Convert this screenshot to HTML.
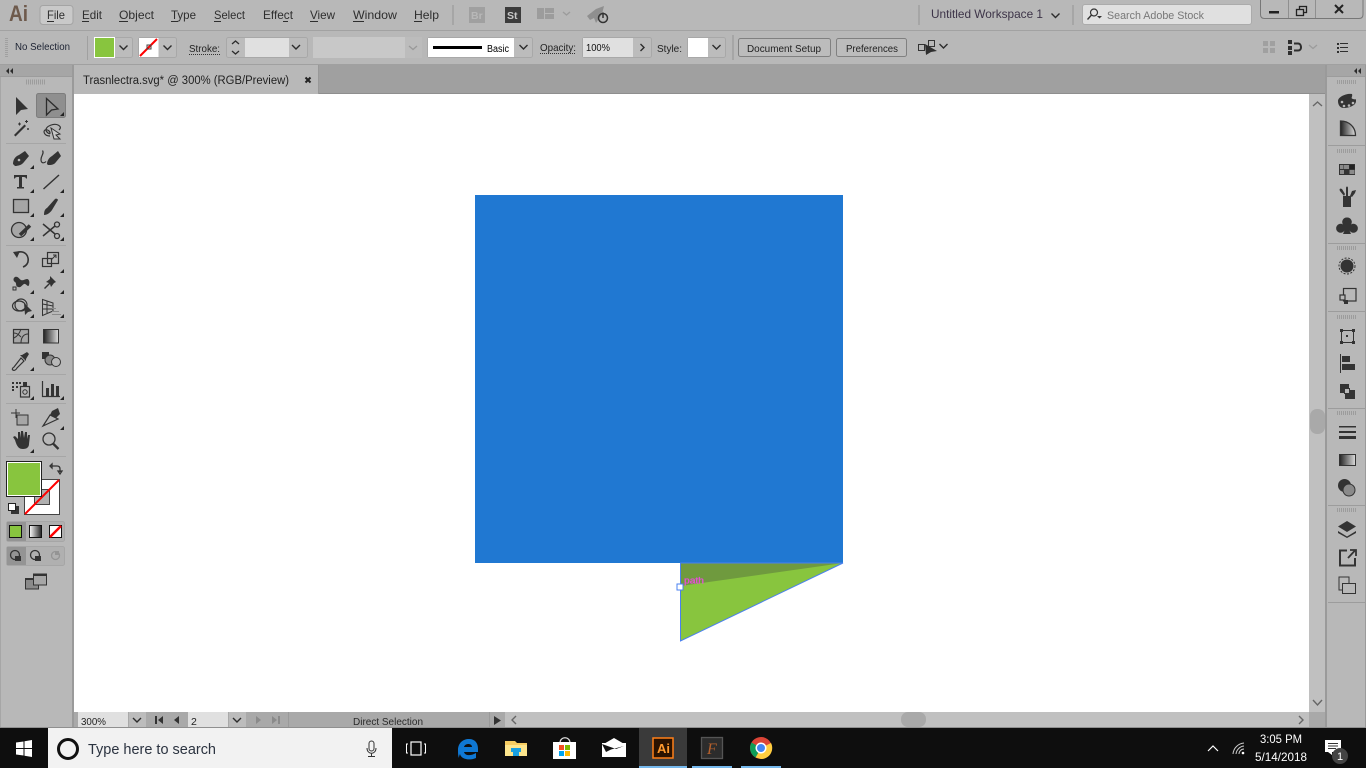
<!DOCTYPE html>
<html><head><meta charset="utf-8"><title>Illustrator</title>
<style>
html,body{margin:0;padding:0;width:1366px;height:768px;overflow:hidden;background:#b8b8b8}
svg{display:block;font-family:"Liberation Sans",sans-serif}
</style></head><body>
<svg width="1366" height="768" viewBox="0 0 1366 768" xmlns="http://www.w3.org/2000/svg">
<defs>
<path id="c" d="M-4 -2L0 2L4 -2" fill="none" stroke="#2c2c2c" stroke-width="1.4"/>
<path id="f" d="M-2 2H2V-2Z" fill="#222"/>
</defs>
<rect width="1366" height="768" fill="#b8b8b8"/>
<!-- separators top -->
<rect y="30" width="1366" height="1" fill="#a2a2a2"/>
<rect y="64" width="1366" height="1" fill="#a0a0a0"/>
<!-- tab bar -->
<rect x="73" y="65" width="1254" height="29" fill="#a0a0a0"/>
<rect x="73" y="93" width="1254" height="1" fill="#8e8e8e"/>
<rect x="74" y="65" width="244" height="29" fill="#b8b8b8"/>
<rect x="318" y="65" width="1" height="29" fill="#999"/>
<text x="83" y="84" font-size="11.5" fill="#222" textLength="206" lengthAdjust="spacingAndGlyphs">Trasnlectra.svg* @ 300% (RGB/Preview)</text>
<path d="M305.500 77.500L310.500 82.500M310.500 77.500L305.500 82.500" stroke="#222" stroke-width="2"/>
<!-- canvas -->
<rect x="74" y="94" width="1236" height="618" fill="#fff"/>
<rect x="475" y="195" width="368" height="368" fill="#2078d2"/>
<path d="M680.500 563H843L680.500 641Z" fill="#88c53e"/>
<path d="M680.500 563H843L680.500 586Z" fill="#6f9a3e"/>
<path d="M680.500 563H843L680.500 641Z" fill="none" stroke="#4a80f0" stroke-width="1"/>
<rect x="677" y="584" width="6" height="6" fill="#fff" stroke="#4a80f0"/>
<text x="684" y="583.500" font-size="9.500" fill="#e84fd8" stroke="#e84fd8" stroke-width="0.300" textLength="20" lengthAdjust="spacingAndGlyphs">path</text>
<!-- left panel -->
<rect x="0" y="65" width="72" height="663" fill="#b8b8b8"/>
<rect x="0" y="65" width="72" height="12" fill="#a6a6a6"/>
<rect x="0" y="76" width="72" height="1" fill="#9c9c9c"/>
<rect x="72" y="65" width="2" height="663" fill="#9a9a9a"/>
<rect x="0" y="77" width="1" height="651" fill="#a6a6a6"/>
<path d="M9 68L6 71L9 74ZM13 68L10 71L13 74Z" fill="#2c2c2c"/>
<line x1="26" x2="45" y1="82" y2="82" stroke="#9c9c9c" stroke-width="5" stroke-dasharray="1 1"/>
<g fill="#a6a6a6">
<rect x="6" y="143" width="60" height="1"/><rect x="6" y="245" width="60" height="1"/><rect x="6" y="321" width="60" height="1"/><rect x="6" y="374" width="60" height="1"/><rect x="6" y="403" width="60" height="1"/><rect x="6" y="456" width="60" height="1"/>
</g>
<!-- tools -->
<rect x="36.500" y="93.500" width="29" height="24" rx="2" fill="#8f8f8f" stroke="#7d7d7d"/>
<g fill="#333" stroke="none">
<path d="M16 97L28 109L21 110L16 115Z"/>
<path d="M46.500 98.500L58 109L51.500 110L46.500 115Z" fill="none" stroke="#2c2c2c" stroke-width="1.300"/>
<use href="#f" x="62" y="114"/>
<path d="M14 135L24.500 124.500L26 126L15.500 136.500Z"/>
<path d="M18 124h3M19.500 122.500v3M25 121.500h3M26.500 120v3M27 129h2M28 128v2" stroke="#333"/>
<path d="M50 136c-6 0-7-5-5-6s5 1 5 3-4-1-4-3c0-4 8-7 12-5s2 4 1 5" fill="none" stroke="#333" stroke-width="1.200"/>
<path d="M51 128L60 134L56 135L60 139L54 139Z" fill="#c8c8c8" stroke="#333"/>
<path d="M13 164c0-5 3-8 6-9l6-4 4 5-5 6c-2 3-6 4-9 4l-2-2zM18 160l2-2" />
<circle cx="19" cy="160" r="1.300" fill="#b8b8b8"/>
<use href="#f" x="32" y="167"/>
<path d="M47 164c0-4 3-7 5-8l6-5 3 5-5 6c-2 3-5 3-8 3z" stroke="none"/>
<path d="M42.500 150.500c2 3-1.500 5-1.500 9s3 4 5 2" fill="none" stroke="#333" stroke-width="1.200"/>
<path d="M14 175H27V178.500H26C25.500 177 25 177 22 177V187H24V188.500H17V187H19V177C16 177 15.500 177 15 178.500H14Z"/>
<use href="#f" x="32" y="191"/>
<path d="M43.500 189L59 175" fill="none" stroke="#333" stroke-width="1.500"/>
<use href="#f" x="62" y="191"/>
<rect x="13.500" y="199.500" width="15" height="13" fill="#a6a6a6" stroke="#333" stroke-width="1.300"/>
<use href="#f" x="32" y="215"/>
<path d="M44 215c0-4 1-6 3-7l8-9c1-1 3 0 3 1l-6 10c-2 3-5 5-8 5z"/>
<use href="#f" x="62" y="215"/>
<circle cx="19" cy="230" r="7.500" fill="#a6a6a6" stroke="#333" stroke-width="1.300"/>
<path d="M20 235L30 225.500" stroke="#333" stroke-width="3.500"/>
<use href="#f" x="32" y="239"/>
<circle cx="57" cy="224.500" r="2.500" fill="none" stroke="#333" stroke-width="1.300"/><circle cx="57" cy="236" r="2.500" fill="none" stroke="#333" stroke-width="1.300"/>
<path d="M43 224L55 234M43 236L55 226" stroke="#333" stroke-width="1.500"/>
<use href="#f" x="62" y="239"/>
<path d="M16 253c6-3 11 0 12 5s-2 8-5 9" fill="none" stroke="#333" stroke-width="1.600"/><path d="M13 252L20 251L17 258Z"/>
<rect x="42.500" y="258.500" width="9" height="8" fill="none" stroke="#333" stroke-width="1.200"/><rect x="47.500" y="252.500" width="11" height="11" fill="none" stroke="#333" stroke-width="1.200"/><path d="M51 260L56 255M53 255H56V258" fill="none" stroke="#333"/>
<use href="#f" x="62" y="271"/>
<path d="M15 277c3-1 4 2 6 3s4-1 6-1 3 3 2 6-3-2-5-1-3 4-6 3-1-4-3-5-2-4 0-5z"/>
<rect x="13" y="287" width="3" height="3" fill="#b8b8b8" stroke="#333"/>
<use href="#f" x="32" y="292"/>
<path d="M50 276l6 6-2 1-3 4-1-3-5 5-1-1 5-5-3-1 4-3z"/>
<use href="#f" x="62" y="292"/>
<ellipse cx="19" cy="306" rx="6.500" ry="5" fill="none" stroke="#333" stroke-width="1.200"/><circle cx="21" cy="305" r="6" fill="none" stroke="#333" stroke-width="1.200"/><path d="M24 303L32 311L28 312L25 315Z"/>
<use href="#f" x="32" y="316"/>
<path d="M42.500 299.500V315.500L53 311V303ZM42.500 304L53 306M42.500 309L53 309M47 301.500V313" fill="none" stroke="#333"/>
<path d="M52 308H56V309H52zM52 311H59V312H52zM52 314H61V315H52z" fill="#8a8a8a"/>
<use href="#f" x="62" y="316"/>
<rect x="13.500" y="329.500" width="15" height="13.500" fill="#a6a6a6" stroke="#333" stroke-width="1.200"/>
<path d="M14 338c4-2 6-6 7-9M28 334c-4 0-7 3-7 9M14 333c3 0 5 2 7 4" fill="none" stroke="#333"/>
</g>
<defs><linearGradient id="g1"><stop offset="0" stop-color="#222"/><stop offset="1" stop-color="#ddd"/></linearGradient><linearGradient id="g2"><stop offset="0" stop-color="#fff"/><stop offset="1" stop-color="#222"/></linearGradient></defs>
<rect x="43.500" y="329.500" width="15" height="13.500" fill="url(#g1)" stroke="#333"/>
<g fill="#333">
<path d="M14 367c-2 1-2 3-1 3 1 1 3 0 4-2l7-7-3-3z" fill="none" stroke="#333" stroke-width="1.200"/>
<path d="M22 355L27 352L29 354L26 359L26 361L20 355Z"/><use href="#f" x="32" y="369"/>
<rect x="42" y="352" width="7" height="7"/><circle cx="50" cy="360" r="5" fill="#8a8a8a" stroke="#333"/><circle cx="56" cy="362" r="4.500" fill="#b8b8b8" stroke="#333"/>
<rect x="12" y="382" width="2" height="2"/><rect x="16" y="382" width="2" height="2"/><rect x="19" y="382" width="2" height="2"/><rect x="12" y="386" width="2" height="2"/><rect x="16" y="386" width="2" height="2"/><rect x="12" y="389" width="2" height="2"/>
<rect x="20.500" y="386.500" width="9" height="10.500" fill="none" stroke="#333" stroke-width="1.200"/><rect x="23" y="382" width="4" height="4"/><circle cx="25" cy="392" r="2.200" fill="none" stroke="#333"/><use href="#f" x="32" y="398"/>
<path d="M42.500 381V396.500H60" fill="none" stroke="#333" stroke-width="1.200"/><rect x="46" y="388" width="3" height="8"/><rect x="51" y="384" width="3" height="12"/><rect x="56" y="386" width="3" height="10"/><use href="#f" x="62" y="398"/>
<path d="M11 413H20M16 409V418" stroke="#333"/><path d="M17 415H28V425H17Z" fill="#a6a6a6" stroke="#333"/>
<path d="M43 426L50 415L58 419Z" fill="none" stroke="#333" stroke-width="1.200"/><path d="M52 411L58 408L60 414L56 418L50 415Z"/><use href="#f" x="62" y="428"/>
<path d="M15 440l-2-3 2-1 3 3v-7h2l1 6v-7h2l1 7 1-6h2l0 7 1-4h2l-1 9c0 3-2 5-6 5s-6-2-8-9z"/><use href="#f" x="32" y="451"/>
<circle cx="49" cy="439" r="6" fill="none" stroke="#333" stroke-width="1.300"/><path d="M53 443.500L58.500 449" stroke="#333" stroke-width="2.300"/>
</g>
<!-- fill stroke -->
<rect x="24.500" y="479.500" width="35" height="35" fill="#fff" stroke="#444"/>
<rect x="34.500" y="489.500" width="15" height="15" fill="#b0b0b0" stroke="#444"/>
<path d="M25 514L59 480" stroke="#f00" stroke-width="2"/>
<rect x="6.500" y="461.500" width="35" height="35" fill="#88c53e" stroke="#222"/>
<rect x="7.500" y="462.500" width="33" height="33" fill="none" stroke="#fff"/>
<path d="M52 466h5c2 0 3 1 3 3v3M52 464l-2 2 2 2zM58 471l2 3 2-3z" fill="none" stroke="#333" stroke-width="1.300"/>
<rect x="11.500" y="506.500" width="7" height="7" fill="#333" stroke="#333"/><rect x="8.500" y="503.500" width="7" height="7" fill="#fff" stroke="#222"/>
<rect x="6.500" y="521.500" width="58" height="20" rx="2" fill="#b0b0b0" stroke="#a6a6a6"/>
<rect x="7" y="522" width="19" height="19" fill="#949494"/>
<rect x="9.500" y="525.500" width="12" height="12" fill="#88c53e" stroke="#111"/>
<rect x="29.500" y="525.500" width="12" height="12" fill="url(#g2)" stroke="#111"/>
<rect x="49.500" y="525.500" width="12" height="12" fill="#fff" stroke="#111"/><path d="M50 537L61 526" stroke="#f00" stroke-width="2.500"/>
<rect x="6.500" y="546.500" width="58" height="19" rx="2" fill="#b0b0b0" stroke="#a6a6a6"/>
<rect x="7" y="547" width="19" height="18" fill="#949494"/>
<g fill="none" stroke="#333" stroke-width="1.300"><circle cx="15" cy="555" r="4.500"/><circle cx="35" cy="555" r="4.500"/></g>
<rect x="15" y="556" width="6" height="5" fill="#333"/><rect x="35" y="556" width="6" height="5" fill="#333"/>
<circle cx="55.500" cy="555.500" r="4" fill="none" stroke="#949494" stroke-width="1.300"/><rect x="55" y="551" width="4" height="4" fill="#949494"/>
<rect x="25.500" y="578.500" width="13" height="10.500" fill="#8a8a8a" stroke="#333"/><rect x="33.500" y="574" width="13" height="11" fill="#a6a6a6" stroke="#333"/><rect x="33" y="573.500" width="14" height="2.500" fill="#333"/><rect x="25" y="578" width="8" height="2" fill="#333"/>
<!-- right scroll -->
<rect x="1309" y="94" width="16" height="634" fill="#c0c0c0"/>
<path d="M1313 106L1317.500 102L1322 106" fill="none" stroke="#666" stroke-width="1.400"/>
<path d="M1313 700L1317.500 705L1322 700" fill="none" stroke="#666" stroke-width="1.400"/>
<rect x="1310" y="409" width="15" height="25" rx="7" fill="#a9a9a9"/>
<rect x="1325" y="65" width="2" height="663" fill="#9a9a9a"/>
<!-- right panel -->
<rect x="1327" y="65" width="39" height="12" fill="#a6a6a6"/>
<rect x="1327" y="76" width="39" height="1" fill="#9c9c9c"/>
<path d="M1357 68L1354 71L1357 74ZM1361 68L1358 71L1361 74Z" fill="#2c2c2c"/>
<rect x="1365" y="65" width="1" height="663" fill="#9a9a9a"/>
<g fill="#9c9c9c"><rect x="1328" y="145" width="38" height="1"/><rect x="1328" y="243" width="38" height="1"/><rect x="1328" y="311" width="38" height="1"/><rect x="1328" y="408" width="38" height="1"/><rect x="1328" y="505" width="38" height="1"/><rect x="1328" y="602" width="38" height="1"/></g>
<g stroke="#9c9c9c" stroke-width="4" stroke-dasharray="1 1"><line x1="1337" x2="1357" y1="82" y2="82"/><line x1="1337" x2="1357" y1="151" y2="151"/><line x1="1337" x2="1357" y1="248" y2="248"/><line x1="1337" x2="1357" y1="317" y2="317"/><line x1="1337" x2="1357" y1="413" y2="413"/><line x1="1337" x2="1357" y1="510" y2="510"/></g>
<g fill="#333">
<path d="M1338 101c0-4 8-8 14-7 1 3-2 4 1 5s3-1 3 2c0 5-8 7-12 7s-6-3-6-7z"/>
<g fill="#b8b8b8"><circle cx="1342" cy="102" r="1.300"/><circle cx="1344" cy="106" r="1.300"/><circle cx="1349" cy="105.500" r="1.300"/><circle cx="1353" cy="103" r="1.300"/></g>
</g>
<path d="M1340.500 121V135.500H1355.500C1355.500 127 1349 121 1340.500 121Z" fill="url(#g1)" stroke="#333" stroke-width="1.300"/>
<g fill="#333">
<rect x="1339" y="164" width="16" height="11"/><rect x="1344" y="165" width="5" height="4" fill="#8a8a8a"/><rect x="1349.500" y="165" width="5" height="4" fill="#222"/><rect x="1349.500" y="170" width="5" height="4" fill="#8a8a8a"/><rect x="1340" y="170" width="4" height="4" fill="#8a8a8a"/><rect x="1340" y="165" width="3.500" height="4" fill="#8a8a8a"/>
<path d="M1343 196H1351V207H1343Z"/><path d="M1346 196V188c0-2 2-2 2 0v8zM1344 196l-4-5c-1-2 0-3 2-2l3 5zM1350 196l2-5 4-1-1 3-3 4z"/>
<path d="M1347 217.500a4.500 4.500 0 0 1 4 7a4.500 4.500 0 1 1-1.500 6l1.500 3.500h-8l1.500-3.500a4.500 4.500 0 1 1-1.500-6a4.500 4.500 0 0 1 4-7z"/>
<circle cx="1347" cy="266" r="6.500"/>
</g>
<circle cx="1347" cy="266" r="8" fill="none" stroke="#333" stroke-dasharray="2 1.500"/>
<rect x="1343.500" y="288.500" width="12.500" height="12.500" fill="none" stroke="#333" stroke-width="1.200"/>
<rect x="1340" y="295" width="5" height="5" fill="#b8b8b8" stroke="#333" stroke-width="1.200"/><rect x="1344" y="300" width="4" height="4" fill="#333"/>
<rect x="1341.500" y="330.500" width="12" height="12" fill="none" stroke="#333"/>
<g fill="#333"><rect x="1340" y="329" width="3" height="3"/><rect x="1352" y="329" width="3" height="3"/><rect x="1340" y="341" width="3" height="3"/><rect x="1352" y="341" width="3" height="3"/><rect x="1346" y="335" width="2" height="2"/>
<rect x="1340" y="354" width="1" height="19"/><rect x="1342" y="356" width="8" height="6"/><rect x="1342" y="364" width="13" height="6"/>
<rect x="1340" y="384" width="9" height="9"/><rect x="1345" y="390" width="10" height="9"/></g>
<rect x="1344.500" y="388.500" width="5" height="5" fill="#b8b8b8" stroke="#333"/>
<g fill="#333"><rect x="1339" y="426" width="17" height="1.500"/><rect x="1339" y="431" width="17" height="2"/><rect x="1339" y="436" width="17" height="3"/></g>
<rect x="1339.500" y="454.500" width="16" height="11" fill="url(#g1)" stroke="#333"/>
<circle cx="1344.500" cy="485.500" r="6.500" fill="#333"/><circle cx="1349" cy="490" r="6" fill="#8a8a8a" stroke="#333"/>
<path d="M1347 521L1356 526.500L1347 532L1338 526.500Z" fill="#333"/><path d="M1338 531L1347 536.500L1356 531V533L1347 538L1338 533Z" fill="#333"/>
<path d="M1347 550.500H1340V565.500H1355V558" fill="none" stroke="#333" stroke-width="2"/><path d="M1348 558L1355 550.500M1350 550H1356V556" fill="none" stroke="#333" stroke-width="1.800"/>
<rect x="1339" y="577" width="10" height="13" fill="none" stroke="#333"/><rect x="1342.500" y="583.500" width="13" height="10" fill="#b8b8b8" stroke="#333"/>
<!-- status bar -->
<rect x="74" y="712" width="1235" height="16" fill="#a9a9a9"/>
<rect x="0" y="727" width="1366" height="1" fill="#8f8f8f"/>
<rect x="78" y="712" width="50" height="15" fill="#e0e0e0"/>
<rect x="129" y="712" width="17" height="15" fill="#bcbcbc"/>
<use href="#c" x="137" y="720"/>
<text x="81" y="725" font-size="10.500" fill="#222" textLength="25" lengthAdjust="spacingAndGlyphs">300%</text>
<path d="M155 716H157V724H155ZM163 716V724L158 720ZM179 716V724L174 720Z" fill="#333"/>
<rect x="188" y="712" width="40" height="15" fill="#e0e0e0"/>
<rect x="229" y="712" width="17" height="15" fill="#bcbcbc"/>
<use href="#c" x="237" y="720"/>
<text x="191" y="725" font-size="10.500" fill="#222">2</text>
<path d="M256 716V724L261 720ZM272 716V724L277 720ZM278 716H280V724H278Z" fill="#8a8a8a"/>
<rect x="288" y="712" width="1" height="15" fill="#9a9a9a"/>
<text x="353" y="725" font-size="10.500" fill="#2a2a2a" textLength="70" lengthAdjust="spacingAndGlyphs">Direct Selection</text>
<rect x="489" y="712" width="1" height="15" fill="#9a9a9a"/>
<path d="M494 716V725L501 720.500Z" fill="#333"/>
<rect x="505" y="712" width="804" height="15" fill="#c0c0c0"/>
<path d="M516 716L512 720L516 724" fill="none" stroke="#666" stroke-width="1.400"/>
<path d="M1299 716L1303 720L1299 724" fill="none" stroke="#666" stroke-width="1.400"/>
<rect x="901" y="712" width="25" height="15" rx="7" fill="#a9a9a9"/>
<rect x="1309" y="712" width="16" height="15" fill="#a9a9a9"/>
<!-- menu bar -->
<text x="9" y="21" font-size="22" font-weight="bold" fill="#6e5a4c" textLength="19" lengthAdjust="spacingAndGlyphs">Ai</text>
<rect x="40" y="5.500" width="33" height="19" rx="3" fill="#c9c9c9" stroke="#a4a4a4"/>
<g font-size="12" fill="#2e2e2e">
<text x="47" y="19" textLength="18" lengthAdjust="spacingAndGlyphs">File</text>
<text x="82" y="19" textLength="20" lengthAdjust="spacingAndGlyphs">Edit</text>
<text x="119" y="19" textLength="35" lengthAdjust="spacingAndGlyphs">Object</text>
<text x="171" y="19" textLength="25" lengthAdjust="spacingAndGlyphs">Type</text>
<text x="214" y="19" textLength="31" lengthAdjust="spacingAndGlyphs">Select</text>
<text x="263" y="19" textLength="30" lengthAdjust="spacingAndGlyphs">Effect</text>
<text x="310" y="19" textLength="25" lengthAdjust="spacingAndGlyphs">View</text>
<text x="353" y="19" textLength="44" lengthAdjust="spacingAndGlyphs">Window</text>
<text x="414" y="19" textLength="25" lengthAdjust="spacingAndGlyphs">Help</text>
</g>
<g fill="#2e2e2e"><rect x="47" y="21" width="7" height="1"/><rect x="82" y="21" width="7" height="1"/><rect x="119" y="21" width="9" height="1"/><rect x="171" y="21" width="7" height="1"/><rect x="214" y="21" width="7" height="1"/><rect x="283" y="21" width="5" height="1"/><rect x="310" y="21" width="8" height="1"/><rect x="353" y="21" width="11" height="1"/><rect x="414" y="21" width="8" height="1"/></g>
<g fill="#a6a6a6"><rect x="452" y="5" width="2" height="20"/><rect x="918" y="5" width="2" height="20"/><rect x="1072" y="5" width="2" height="20"/></g>
<rect x="469" y="7" width="16" height="16" fill="#a0a0a0"/>
<text x="471" y="19" font-size="10.500" font-weight="bold" fill="#b8b8b8">Br</text>
<rect x="505" y="7" width="16" height="16" fill="#3c3c3c"/>
<text x="507" y="19" font-size="10.500" font-weight="bold" fill="#c8c8c8">St</text>
<g fill="#9c9c9c"><rect x="537" y="8" width="7" height="11"/><rect x="545" y="8" width="9" height="5"/><rect x="545" y="14" width="9" height="5"/></g>
<path d="M563 12L566.500 15L570 12" fill="none" stroke="#9c9c9c" stroke-width="1.400"/>
<path d="M587 16L596 9L604 6L602 14L596 23L594 18L590 20Z" fill="#8f8f8f"/>
<circle cx="603" cy="18" r="4.500" fill="none" stroke="#333" stroke-width="1.500"/><path d="M603 12.500V18" stroke="#333" stroke-width="1.500"/>
<text x="931" y="18" font-size="12" fill="#3d3448" textLength="112" lengthAdjust="spacingAndGlyphs">Untitled Workspace 1</text>
<use href="#c" x="1055.500" y="15.500"/>
<rect x="1082.500" y="4.500" width="169" height="20" rx="2.500" fill="#e0e0e0" stroke="#ababab"/>
<circle cx="1094" cy="12.500" r="3.500" fill="none" stroke="#333" stroke-width="1.200"/><path d="M1091.500 15L1087.500 19.500" stroke="#333" stroke-width="1.400"/><path d="M1097 16H1102L1099.500 18.500Z" fill="#333"/>
<text x="1107" y="19" font-size="11" fill="#777" textLength="97" lengthAdjust="spacingAndGlyphs">Search Adobe Stock</text>
<path d="M1260.500 0V14.500Q1260.500 18.500 1264.500 18.500H1359Q1363 18.500 1363 14.500V0" fill="#b8b8b8" stroke="#777"/>
<path d="M1288.500 0V18M1315.500 0V18" stroke="#8f8f8f"/>
<rect x="1269" y="11" width="10" height="2.500" fill="#222"/>
<rect x="1299.500" y="6.500" width="7" height="6" fill="none" stroke="#222" stroke-width="1.300"/><rect x="1296.500" y="9.500" width="7" height="6" fill="#b8b8b8" stroke="#222" stroke-width="1.300"/>
<path d="M1335 5L1343 13M1343 5L1335 13" stroke="#222" stroke-width="2"/>
<!-- control bar -->
<line x1="6.500" x2="6.500" y1="38" y2="57" stroke="#a0a0a0" stroke-width="3" stroke-dasharray="1 1"/>
<rect x="87" y="36" width="1" height="24" fill="#a0a0a0"/>
<text x="15" y="50" font-size="10.500" fill="#1d2333" textLength="55" lengthAdjust="spacingAndGlyphs">No Selection</text>
<rect x="94.500" y="37.500" width="38" height="20" rx="2" fill="#bcbcbc" stroke="#a8a8a8"/>
<rect x="94.500" y="37.500" width="20" height="20" fill="#88c53e" stroke="#fff"/>
<use href="#c" x="123.500" y="47.500"/>
<rect x="138.500" y="37.500" width="38" height="20" rx="2" fill="#bcbcbc" stroke="#a8a8a8"/>
<rect x="139" y="38" width="19.500" height="19" fill="#fff"/>
<path d="M140 56L157 39" stroke="#f00" stroke-width="2"/><rect x="147" y="45" width="4" height="4" fill="none" stroke="#444"/>
<use href="#c" x="167.500" y="47.500"/>
<text x="189" y="52" font-size="10.500" fill="#222" textLength="31" lengthAdjust="spacingAndGlyphs">Stroke:</text>
<line x1="189" x2="220" y1="54.500" y2="54.500" stroke="#333" stroke-dasharray="1 1"/>
<rect x="226.500" y="37.500" width="81" height="20" rx="2" fill="#bcbcbc" stroke="#a8a8a8"/>
<rect x="245" y="38" width="44" height="19" fill="#e0e0e0"/>
<path d="M232 44L235.500 41L239 44M232 51L235.500 54L239 51" fill="none" stroke="#2c2c2c" stroke-width="1.300"/>
<use href="#c" x="296" y="47"/>
<rect x="313" y="37" width="92" height="21" fill="#c8c8c8"/>
<rect x="405" y="37" width="17" height="21" fill="#bcbcbc"/>
<path d="M409 46L413 49.500L417 46" fill="none" stroke="#999" stroke-width="1.300"/>
<rect x="427.500" y="37.500" width="105" height="20" rx="2" fill="#bcbcbc" stroke="#a8a8a8"/>
<rect x="428" y="38" width="86" height="19" fill="#fff"/>
<rect x="433" y="46" width="49" height="3" fill="#000"/>
<text x="487" y="52" font-size="10" fill="#000" textLength="22" lengthAdjust="spacingAndGlyphs">Basic</text>
<use href="#c" x="523.500" y="47"/>
<text x="540" y="51" font-size="10.500" fill="#222" textLength="36" lengthAdjust="spacingAndGlyphs">Opacity:</text>
<line x1="540" x2="576" y1="53.500" y2="53.500" stroke="#333" stroke-dasharray="1 1"/>
<rect x="582.500" y="37.500" width="69" height="20" rx="2" fill="#bcbcbc" stroke="#a8a8a8"/>
<rect x="583" y="38" width="50" height="19" fill="#e0e0e0"/>
<text x="586" y="51" font-size="10.500" fill="#111" textLength="24" lengthAdjust="spacingAndGlyphs">100%</text>
<path d="M640.500 44L644 47.500L640.500 51" fill="none" stroke="#2c2c2c" stroke-width="1.400"/>
<text x="657" y="52" font-size="10.500" fill="#222" textLength="25" lengthAdjust="spacingAndGlyphs">Style:</text>
<rect x="687.500" y="37.500" width="38" height="20" rx="2" fill="#bcbcbc" stroke="#a8a8a8"/>
<rect x="688" y="38" width="20" height="19" fill="#fff"/>
<use href="#c" x="716.500" y="47"/>
<rect x="732" y="35" width="2" height="25" fill="#a6a6a6"/>
<rect x="738.500" y="38.500" width="92" height="18" rx="2" fill="#bcbcbc" stroke="#808080"/>
<text x="747" y="52" font-size="10.500" fill="#222" textLength="74" lengthAdjust="spacingAndGlyphs">Document Setup</text>
<rect x="836.500" y="38.500" width="70" height="18" rx="2" fill="#bcbcbc" stroke="#808080"/>
<text x="846" y="52" font-size="10.500" fill="#222" textLength="52" lengthAdjust="spacingAndGlyphs">Preferences</text>
<rect x="918.500" y="44.500" width="6" height="6" fill="none" stroke="#333"/><rect x="928.500" y="40.500" width="6" height="6" fill="none" stroke="#333"/>
<path d="M925 44L937 51L931 52L926 55Z" fill="#2e2e2e"/>
<use href="#c" x="943.500" y="46"/>
<g fill="#a0a0a0"><rect x="1263" y="41" width="5" height="5"/><rect x="1270" y="41" width="5" height="5"/><rect x="1263" y="48" width="5" height="5"/><rect x="1270" y="48" width="5" height="5"/></g>
<g fill="#2e2e2e"><rect x="1288" y="40" width="4" height="4"/><rect x="1288" y="46" width="4" height="4"/><rect x="1288" y="51" width="4" height="4"/></g>
<path d="M1294 43.500H1298C1300.500 43.500 1301 46 1301 47.500S1300 50.500 1298 50.500H1294" fill="none" stroke="#2e2e2e" stroke-width="2"/>
<path d="M1309 45L1313 48.500L1317 45" fill="none" stroke="#9c9c9c" stroke-width="1.300"/>
<g fill="#2e2e2e"><rect x="1337" y="43" width="2" height="2"/><rect x="1337" y="47" width="2" height="2"/><rect x="1337" y="51" width="2" height="2"/><rect x="1340" y="43" width="8" height="1"/><rect x="1340" y="47" width="8" height="1"/><rect x="1340" y="51" width="8" height="1"/></g>
<!-- taskbar -->
<rect y="728" width="1366" height="40" fill="#0e0e0e"/>
<g fill="#fff"><path d="M16 742.500L23.500 741.500V748H16ZM24.500 741.300L32 740V748H24.500ZM16 749H23.500V755.500L16 754.500ZM24.500 749H32V757L24.500 755.700Z"/></g>
<rect x="48" y="728" width="344" height="40" fill="#f2f2f2"/>
<circle cx="68" cy="749" r="9.500" fill="none" stroke="#111" stroke-width="3"/>
<text x="88" y="754" font-size="14.500" fill="#2b3340" textLength="128" lengthAdjust="spacingAndGlyphs">Type here to search</text>
<rect x="369" y="741" width="5" height="10" rx="2.500" fill="none" stroke="#333"/><path d="M367 748c0 7 9 7 9 0M371.500 753v3M368 756.500h7" fill="none" stroke="#333"/>
<rect x="411" y="742" width="10" height="13" fill="none" stroke="#fff" stroke-width="1.200"/><path d="M408 744H406.500V753H408M424 744H425.500V753H424" fill="none" stroke="#fff"/>
<path d="M458 750c0-7 5-11 11-11 6 0 9 4 9 10v3H464c1 4 7 4 12 1v5c-7 3-15 1-16-4-1 2-1 3-1 4-1-2-1-5-1-8zM464 747h8c0-4-7-4-8 0z" fill="#0f78d4"/>
<path d="M505 741H515L517 743H527V756H505Z" fill="#f6cc61"/><rect x="505" y="745" width="22" height="11" fill="#fde58d"/><path d="M511 748H521V752H519V756H513V752H511Z" fill="#1aa0e0"/>
<path d="M560 743c0-7 10-7 10 0" fill="none" stroke="#ddd" stroke-width="1.300"/>
<rect x="553" y="742" width="23" height="17" fill="#fff"/><rect x="559" y="745" width="5" height="5" fill="#f25022"/><rect x="565" y="745" width="5" height="5" fill="#7fba00"/><rect x="559" y="751" width="5" height="5" fill="#00a4ef"/><rect x="565" y="751" width="5" height="5" fill="#ffb900"/>
<rect x="602" y="743" width="24" height="14" fill="#fff"/><path d="M602 745L614 738L626 745L612 748L618 752Z" fill="#fff"/><path d="M602 744L616 749L624 746L611 749.500L606 752Z" fill="#111"/>
<rect x="639" y="728" width="48" height="40" fill="#3a3a3a"/>
<rect x="653" y="738" width="20" height="20" fill="#2a1200" stroke="#ff7f18" stroke-width="1.500"/>
<text x="657" y="753" font-size="13" font-weight="bold" fill="#ff9a2e">Ai</text>
<rect x="701.500" y="737.500" width="21" height="21" fill="#2c2c2c" stroke="#555" stroke-width="1.300"/>
<text x="707" y="754" font-size="16" font-style="italic" fill="#b5602c" font-family="Liberation Serif,serif">F</text>
<circle cx="761" cy="748" r="11" fill="#db4437"/>
<path d="M761 748L771 743A11 11 0 0 1 761 759L755.500 757.500Z" fill="#ffcd40"/>
<path d="M755.500 757.500L761 748L751.500 742.500A11 11 0 0 0 755.500 757.500Z" fill="#0f9d58"/>
<circle cx="761" cy="748" r="5.500" fill="#fff"/><circle cx="761" cy="748" r="4" fill="#4285f4"/>
<g fill="#76b9ed"><rect x="639" y="766" width="48" height="2"/><rect x="692" y="766" width="40" height="2"/><rect x="741" y="766" width="40" height="2"/></g>
<path d="M1208 751L1213 746L1218 751" fill="none" stroke="#fff" stroke-width="1.200"/>
<g fill="none" stroke="#ccc"><path d="M1233 754a12 12 0 0 1 11-11"/><path d="M1236 754a9 9 0 0 1 8-8"/><path d="M1239 754a5 5 0 0 1 5-5"/></g><circle cx="1243" cy="753" r="1.300" fill="#fff"/>
<text x="1260" y="743" font-size="12" fill="#fff" textLength="42" lengthAdjust="spacingAndGlyphs">3:05 PM</text>
<text x="1255" y="761" font-size="12" fill="#fff" textLength="52" lengthAdjust="spacingAndGlyphs">5/14/2018</text>
<path d="M1325 740H1341V752H1332L1332 755L1328 752H1325Z" fill="#fff"/>
<path d="M1328 743.500H1338M1328 746H1338M1328 748.500H1336" stroke="#333"/>
<circle cx="1340" cy="756" r="8" fill="#444"/>
<text x="1337" y="760" font-size="11" fill="#fff">1</text>
</svg>
</body></html>
